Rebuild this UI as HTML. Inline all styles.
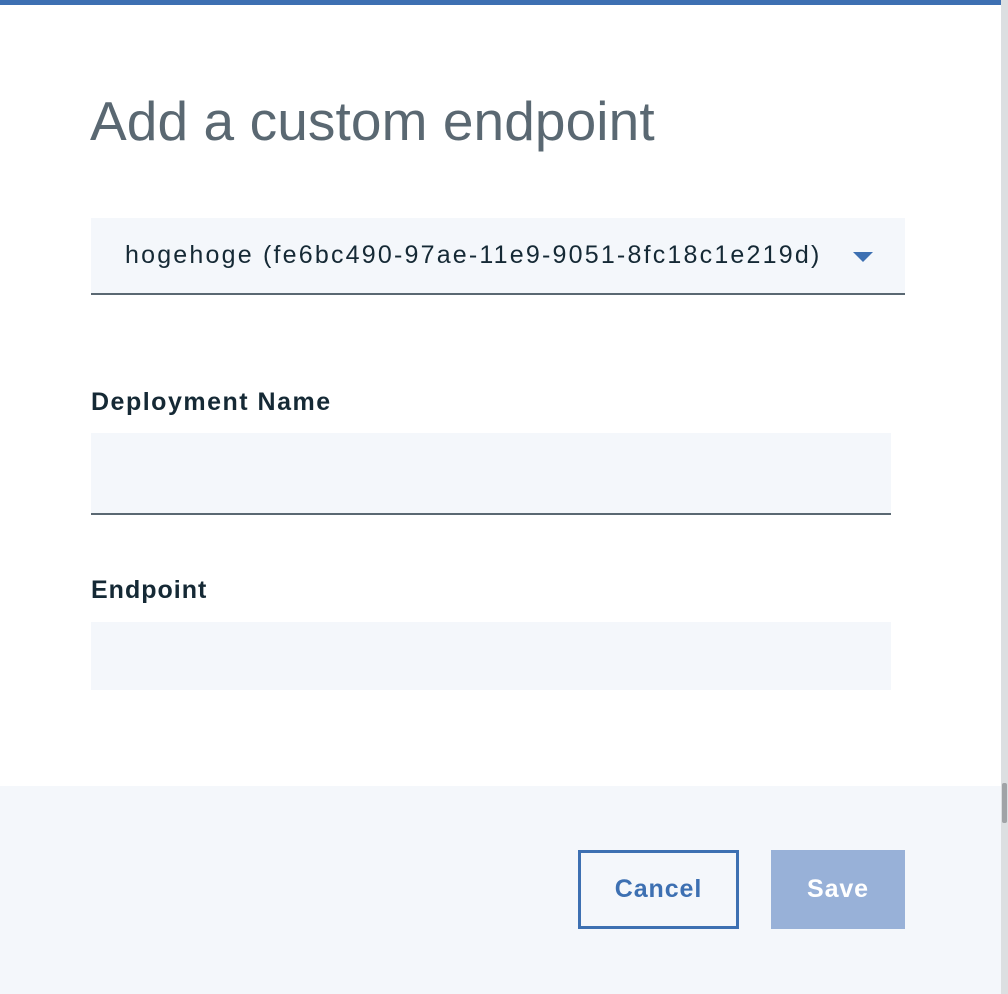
<!DOCTYPE html>
<html><head><style>
body{margin:0;width:1008px;height:994px;background:#dcdfe1;position:relative;overflow:hidden;font-family:"Liberation Sans",sans-serif}
.m{position:absolute;left:0;top:0;width:1001px;height:994px;background:#fff}
.bar{position:absolute;left:0;top:0;width:1001px;height:5px;background:#3d70b2}
.t{position:absolute;left:90px;top:89px;font-size:55px;font-weight:300;color:#5a6872;letter-spacing:0.1px}
.dd{position:absolute;left:91px;top:218px;width:814px;height:75px;background:#f4f7fb;border-bottom:2px solid #5a6872}
.dd span{position:absolute;left:34px;top:23px;font-size:25px;color:#152935;letter-spacing:2.2px}
.tri{position:absolute;left:853px;top:252px;width:0;height:0;border-left:10px solid transparent;border-right:10px solid transparent;border-top:10px solid #3d70b2}
.l{position:absolute;left:91px;font-size:25px;font-weight:bold;color:#152935}
.in{position:absolute;left:91px;width:800px;background:#f4f7fb}
.f{position:absolute;left:0;top:786px;width:1001px;height:208px;background:#f4f7fb}
.b{position:absolute;top:850px;height:79px;font-size:25px;font-weight:bold;display:flex;align-items:center;justify-content:center;box-sizing:border-box;letter-spacing:0.9px}
.sb{position:absolute;left:1002px;top:783px;width:5px;height:40px;background:#a0a3a6;border-radius:2px}
</style></head><body>
<div class="m">
<div class="bar"></div>
<div class="t">Add a custom endpoint</div>
<div class="dd"><span>hogehoge (fe6bc490-97ae-11e9-9051-8fc18c1e219d)</span></div>
<div class="tri"></div>
<div class="l" style="top:388px;letter-spacing:1.5px">Deployment Name</div>
<div class="in" style="top:433px;height:80px;border-bottom:2px solid #5a6872"></div>
<div class="l" style="top:576px;letter-spacing:1px">Endpoint</div>
<div class="in" style="top:622px;height:68px"></div>
<div class="f"></div>
<div class="b" style="left:578px;width:161px;border:3px solid #3d70b2;color:#3d70b2;background:#fff0">Cancel</div>
<div class="b" style="left:771px;width:134px;background:#98b1d8;color:#fff">Save</div>
</div>
<div class="sb"></div>
</body></html>
